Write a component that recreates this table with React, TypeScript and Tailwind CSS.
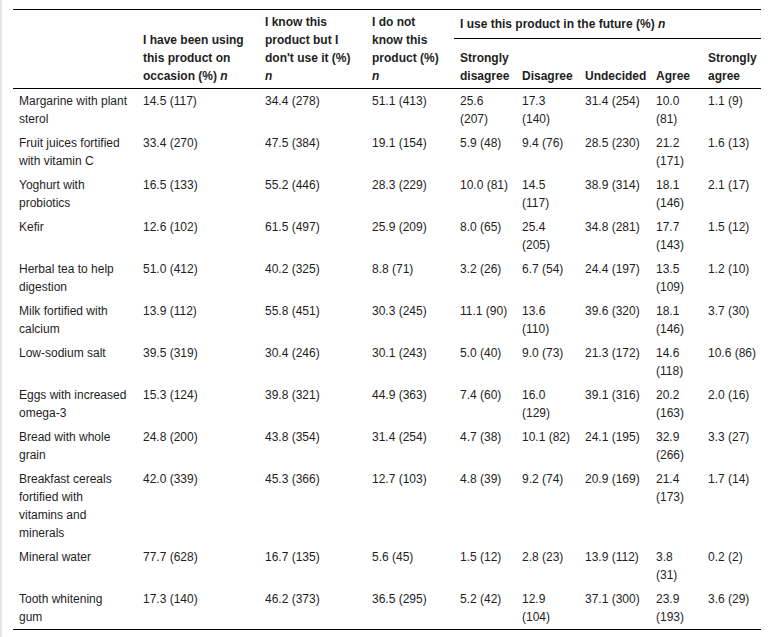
const cols = "grid grid-cols-[124px_122px_107px_88px_62px_63px_71px_52px_59px]";

const rows: string[][] = [
  ["Margarine with plant sterol", "14.5 (117)", "34.4 (278)", "51.1 (413)", "25.6 (207)", "17.3 (140)", "31.4 (254)", "10.0 (81)", "1.1 (9)"],
  ["Fruit juices fortified with vitamin C", "33.4 (270)", "47.5 (384)", "19.1 (154)", "5.9 (48)", "9.4 (76)", "28.5 (230)", "21.2 (171)", "1.6 (13)"],
  ["Yoghurt with probiotics", "16.5 (133)", "55.2 (446)", "28.3 (229)", "10.0 (81)", "14.5 (117)", "38.9 (314)", "18.1 (146)", "2.1 (17)"],
  ["Kefir", "12.6 (102)", "61.5 (497)", "25.9 (209)", "8.0 (65)", "25.4 (205)", "34.8 (281)", "17.7 (143)", "1.5 (12)"],
  ["Herbal tea to help digestion", "51.0 (412)", "40.2 (325)", "8.8 (71)", "3.2 (26)", "6.7 (54)", "24.4 (197)", "13.5 (109)", "1.2 (10)"],
  ["Milk fortified with calcium", "13.9 (112)", "55.8 (451)", "30.3 (245)", "11.1 (90)", "13.6 (110)", "39.6 (320)", "18.1 (146)", "3.7 (30)"],
  ["Low-sodium salt", "39.5 (319)", "30.4 (246)", "30.1 (243)", "5.0 (40)", "9.0 (73)", "21.3 (172)", "14.6 (118)", "10.6 (86)"],
  ["Eggs with increased omega-3", "15.3 (124)", "39.8 (321)", "44.9 (363)", "7.4 (60)", "16.0 (129)", "39.1 (316)", "20.2 (163)", "2.0 (16)"],
  ["Bread with whole grain", "24.8 (200)", "43.8 (354)", "31.4 (254)", "4.7 (38)", "10.1 (82)", "24.1 (195)", "32.9 (266)", "3.3 (27)"],
  ["Breakfast cereals fortified with vitamins and minerals", "42.0 (339)", "45.3 (366)", "12.7 (103)", "4.8 (39)", "9.2 (74)", "20.9 (169)", "21.4 (173)", "1.7 (14)"],
  ["Mineral water", "77.7 (628)", "16.7 (135)", "5.6 (45)", "1.5 (12)", "2.8 (23)", "13.9 (112)", "3.8 (31)", "0.2 (2)"],
  ["Tooth whitening gum", "17.3 (140)", "46.2 (373)", "36.5 (295)", "5.2 (42)", "12.9 (104)", "37.1 (300)", "23.9 (193)", "3.6 (29)"],
];

function cellPad(i: number) {
  if (i === 0) return "pl-[6px] pr-[8px]";
  if (i === 8) return "pl-[6px] pr-[4px]";
  return "px-[6px]";
}

function N() {
  return <i>n</i>;
}

export default function App() {
  return (
    <div
      className="h-[637px] w-[770px] overflow-hidden border-l-2 border-[#e6e6e6] bg-white pl-[11px] pt-[9px] text-[12px] leading-[18px] text-[#1e1e1e]"
      style={{ fontFamily: '"Liberation Sans", Arial, sans-serif' }}
    >
      <div className="w-[748px]">
        <div className={`${cols} grid-rows-[29px_49px] border-y border-black font-bold`}>
          <div className="row-span-2" />
          <div className="row-span-2 flex flex-col justify-end px-[6px] py-[3px]">
            <span>I have been using</span>
            <span>this product on</span>
            <span>
              occasion (%) <N />
            </span>
          </div>
          <div className="row-span-2 flex flex-col justify-end px-[6px] py-[3px]">
            <span>I know this</span>
            <span>product but I</span>
            <span>don't use it (%)</span>
            <span>
              <N />
            </span>
          </div>
          <div className="row-span-2 flex flex-col justify-end px-[6px] py-[3px]">
            <span>I do not</span>
            <span>know this</span>
            <span>product (%)</span>
            <span>
              <N />
            </span>
          </div>
          <div className="col-span-5 col-start-5 row-start-1 flex items-center border-b border-black px-[6px]">
            <span>
              I use this product in the future (%) <N />
            </span>
          </div>
          <div className="col-start-5 row-start-2 flex flex-col justify-end px-[6px] py-[3px]">
            <span>Strongly</span>
            <span>disagree</span>
          </div>
          <div className="col-start-6 row-start-2 flex flex-col justify-end px-[6px] py-[3px]">
            <span>Disagree</span>
          </div>
          <div className="col-start-7 row-start-2 flex flex-col justify-end px-[6px] py-[3px]">
            <span>Undecided</span>
          </div>
          <div className="col-start-8 row-start-2 flex flex-col justify-end px-[6px] py-[3px]">
            <span>Agree</span>
          </div>
          <div className="col-start-9 row-start-2 flex flex-col justify-end pl-[6px] pr-[4px] py-[3px]">
            <span>Strongly</span>
            <span>agree</span>
          </div>
        </div>

        <div className="border-b border-black">
          {rows.map((row) => (
            <div key={row[0]} className={cols}>
              {row.map((value, i) => (
                <div key={i} className={`${cellPad(i)} py-[3px]`}>
                  {value}
                </div>
              ))}
            </div>
          ))}
        </div>
      </div>
    </div>
  );
}
